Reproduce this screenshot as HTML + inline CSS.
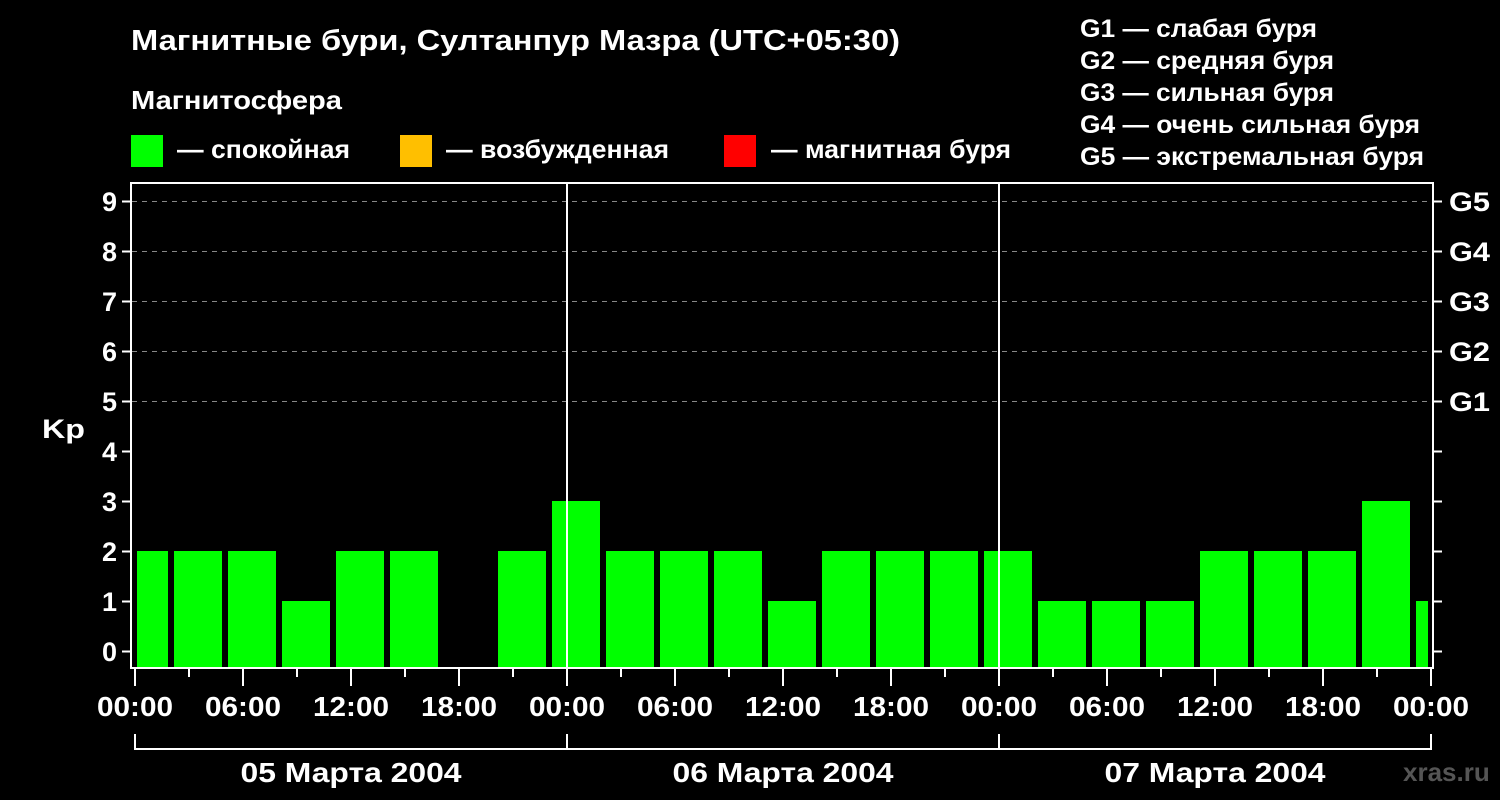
<!DOCTYPE html>
<html><head><meta charset="utf-8"><style>
html,body{margin:0;padding:0;background:#000;width:1500px;height:800px;overflow:hidden}
svg{display:block}
text{font-family:"Liberation Sans",sans-serif;font-weight:bold;fill:#fff}
</style></head><body>
<svg width="1500" height="800" viewBox="0 0 1500 800">
<rect width="1500" height="800" fill="#000"/>
<text x="131" y="50" font-size="29" textLength="769" lengthAdjust="spacingAndGlyphs">Магнитные бури, Султанпур Мазра (UTC+05:30)</text>
<text x="131" y="109" font-size="26" textLength="211" lengthAdjust="spacingAndGlyphs">Магнитосфера</text>
<rect x="131" y="135" width="32" height="32" fill="#00ff00"/>
<text x="177" y="158" font-size="26" textLength="173" lengthAdjust="spacingAndGlyphs">— спокойная</text>
<rect x="400" y="135" width="32" height="32" fill="#ffbf00"/>
<text x="446" y="158" font-size="26" textLength="223" lengthAdjust="spacingAndGlyphs">— возбужденная</text>
<rect x="724" y="135" width="32" height="32" fill="#ff0000"/>
<text x="771" y="158" font-size="26" textLength="240" lengthAdjust="spacingAndGlyphs">— магнитная буря</text>
<g font-size="25">
<text x="1080" y="37" textLength="237" lengthAdjust="spacingAndGlyphs">G1 — слабая буря</text>
<text x="1080" y="69" textLength="254" lengthAdjust="spacingAndGlyphs">G2 — средняя буря</text>
<text x="1080" y="101" textLength="254" lengthAdjust="spacingAndGlyphs">G3 — сильная буря</text>
<text x="1080" y="133" textLength="340" lengthAdjust="spacingAndGlyphs">G4 — очень сильная буря</text>
<text x="1080" y="165" textLength="344" lengthAdjust="spacingAndGlyphs">G5 — экстремальная буря</text>
</g>
<g stroke="#888" stroke-width="1" stroke-dasharray="5,5">
<line x1="132" y1="201.5" x2="1432" y2="201.5"/>
<line x1="132" y1="251.5" x2="1432" y2="251.5"/>
<line x1="132" y1="301.5" x2="1432" y2="301.5"/>
<line x1="132" y1="351.5" x2="1432" y2="351.5"/>
<line x1="132" y1="401.5" x2="1432" y2="401.5"/>
</g>
<g fill="#00ff00">
<rect x="137" y="551" width="31" height="117"/>
<rect x="174" y="551" width="48" height="117"/>
<rect x="228" y="551" width="48" height="117"/>
<rect x="282" y="601" width="48" height="67"/>
<rect x="336" y="551" width="48" height="117"/>
<rect x="390" y="551" width="48" height="117"/>
<rect x="498" y="551" width="48" height="117"/>
<rect x="552" y="501" width="48" height="167"/>
<rect x="606" y="551" width="48" height="117"/>
<rect x="660" y="551" width="48" height="117"/>
<rect x="714" y="551" width="48" height="117"/>
<rect x="768" y="601" width="48" height="67"/>
<rect x="822" y="551" width="48" height="117"/>
<rect x="876" y="551" width="48" height="117"/>
<rect x="930" y="551" width="48" height="117"/>
<rect x="984" y="551" width="48" height="117"/>
<rect x="1038" y="601" width="48" height="67"/>
<rect x="1092" y="601" width="48" height="67"/>
<rect x="1146" y="601" width="48" height="67"/>
<rect x="1200" y="551" width="48" height="117"/>
<rect x="1254" y="551" width="48" height="117"/>
<rect x="1308" y="551" width="48" height="117"/>
<rect x="1362" y="501" width="48" height="167"/>
<rect x="1416" y="601" width="12" height="67"/>
</g>
<g stroke="#fff" stroke-width="2" fill="none">
<rect x="131" y="183" width="1302" height="485"/>
<line x1="567" y1="183" x2="567" y2="668"/>
<line x1="999" y1="183" x2="999" y2="668"/>
<path d="M122 201.5h9M122 251.5h9M122 301.5h9M122 351.5h9M122 401.5h9M122 451.5h9M122 501.5h9M122 551.5h9M122 601.5h9M122 651.5h9"/>
<path d="M1433 201.5h9M1433 251.5h9M1433 301.5h9M1433 351.5h9M1433 401.5h9M1433 451.5h9M1433 501.5h9M1433 551.5h9M1433 601.5h9M1433 651.5h9"/>
<path d="M135 668v18M243 668v18M351 668v18M459 668v18M567 668v18M675 668v18M783 668v18M891 668v18M999 668v18M1107 668v18M1215 668v18M1323 668v18M1431 668v18"/>
<path d="M189 668v9M297 668v9M405 668v9M513 668v9M621 668v9M729 668v9M837 668v9M945 668v9M1053 668v9M1161 668v9M1269 668v9M1377 668v9"/>
<path d="M135 734v15H1431V734M567 734v15M999 734v15"/>
</g>
<g font-size="27" text-anchor="end">
<text x="117" y="211">9</text><text x="117" y="261">8</text><text x="117" y="311">7</text>
<text x="117" y="361">6</text><text x="117" y="411">5</text><text x="117" y="461">4</text>
<text x="117" y="511">3</text><text x="117" y="561">2</text><text x="117" y="611">1</text>
<text x="117" y="661">0</text>
</g>
<text x="42" y="438" font-size="27" textLength="43" lengthAdjust="spacingAndGlyphs">Kp</text>
<g font-size="27">
<text x="1449" y="211" textLength="41" lengthAdjust="spacingAndGlyphs">G5</text><text x="1449" y="261" textLength="41" lengthAdjust="spacingAndGlyphs">G4</text><text x="1449" y="311" textLength="41" lengthAdjust="spacingAndGlyphs">G3</text>
<text x="1449" y="361" textLength="41" lengthAdjust="spacingAndGlyphs">G2</text><text x="1449" y="411" textLength="41" lengthAdjust="spacingAndGlyphs">G1</text>
</g>
<g font-size="28" text-anchor="middle">
<text x="135" y="716" textLength="76" lengthAdjust="spacingAndGlyphs">00:00</text><text x="243" y="716" textLength="76" lengthAdjust="spacingAndGlyphs">06:00</text><text x="351" y="716" textLength="76" lengthAdjust="spacingAndGlyphs">12:00</text>
<text x="459" y="716" textLength="76" lengthAdjust="spacingAndGlyphs">18:00</text><text x="567" y="716" textLength="76" lengthAdjust="spacingAndGlyphs">00:00</text><text x="675" y="716" textLength="76" lengthAdjust="spacingAndGlyphs">06:00</text>
<text x="783" y="716" textLength="76" lengthAdjust="spacingAndGlyphs">12:00</text><text x="891" y="716" textLength="76" lengthAdjust="spacingAndGlyphs">18:00</text><text x="999" y="716" textLength="76" lengthAdjust="spacingAndGlyphs">00:00</text>
<text x="1107" y="716" textLength="76" lengthAdjust="spacingAndGlyphs">06:00</text><text x="1215" y="716" textLength="76" lengthAdjust="spacingAndGlyphs">12:00</text><text x="1323" y="716" textLength="76" lengthAdjust="spacingAndGlyphs">18:00</text>
<text x="1431" y="716" textLength="76" lengthAdjust="spacingAndGlyphs">00:00</text>
<text x="351" y="782" textLength="221" lengthAdjust="spacingAndGlyphs">05 Марта 2004</text>
<text x="783" y="782" textLength="221" lengthAdjust="spacingAndGlyphs">06 Марта 2004</text>
<text x="1215" y="782" textLength="221" lengthAdjust="spacingAndGlyphs">07 Марта 2004</text>
</g>
<text x="1403" y="781" font-size="26" style="fill:#555">xras.ru</text>
</svg>
</body></html>
